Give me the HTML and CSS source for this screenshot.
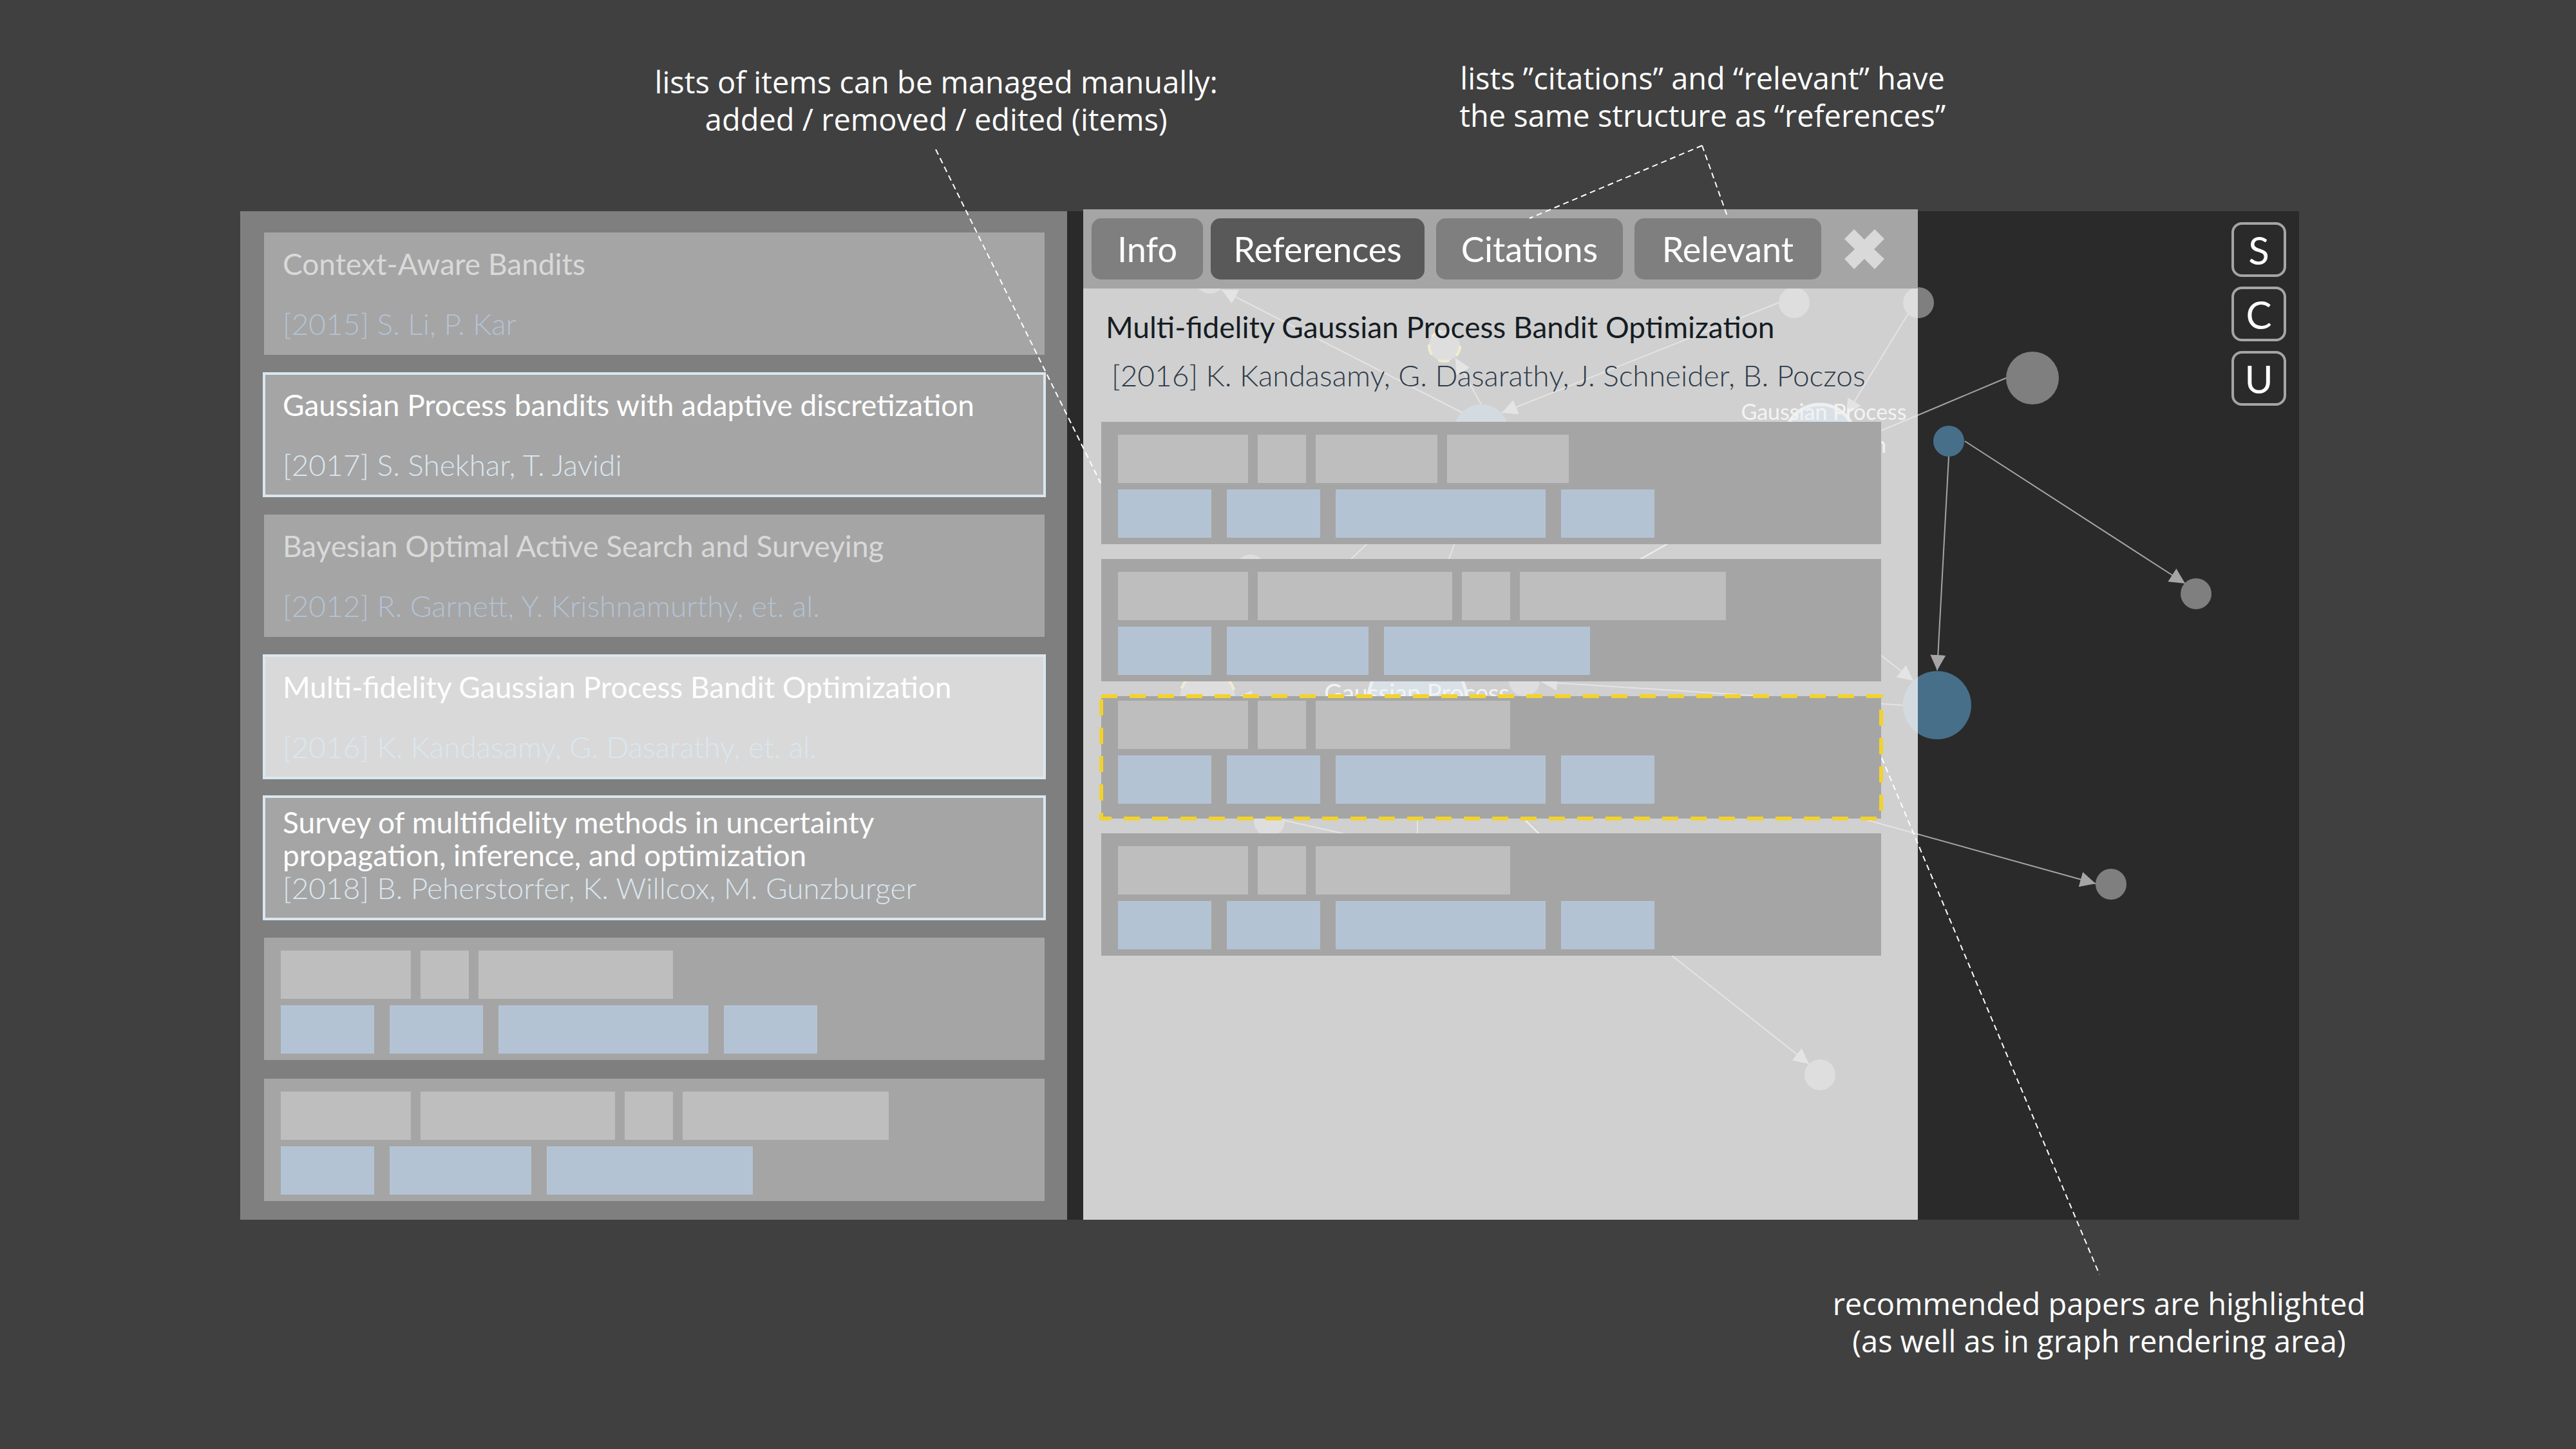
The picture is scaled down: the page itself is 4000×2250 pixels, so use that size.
FILE: index.html
```html
<!DOCTYPE html>
<html lang="en">
<head>
<meta charset="utf-8">
<meta name="viewport" content="width=device-width, initial-scale=1">
<title>Paper lists and citation graph</title>
<link rel="stylesheet" href="styles.css">
</head>
<body>
<div class="page">
  <header class="notes notes--top">
    <p class="note note--manage">lists of items can be managed manually:<br>added / removed / edited (items)</p>
    <p class="note note--lists">lists ”citations” and “relevant” have<br>the same structure as “references”</p>
  </header>

  <main class="frame">
    <div class="stage">
      <svg class="graph" viewBox="373 328 3197 1566" aria-hidden="true">
        <defs>
          <marker id="arrow" markerUnits="userSpaceOnUse" markerWidth="24" markerHeight="24" refX="24" refY="12" orient="auto">
            <path d="M0 0L24 12L0 24Z" fill="#a5a5a5"/>
          </marker>
        </defs>
        <g class="edges">
          <path d="M2271 641L1897 450"/>
          <path d="M2300 628L2260 556"/>
          <path d="M2762 470L2332 641"/>
          <path d="M2963 487L2867 644"/>
          <path d="M3115 587L2880 686"/>
          <path d="M3026 709L3008 1041"/>
          <path d="M3051 685L3393 906"/>
          <path d="M2780 907L2971 1057"/>
          <path d="M2955 1095L2394 1059"/>
          <path d="M2700 1218L3254 1372"/>
          <path d="M2122 1090L1920 1083"/>
          <path d="M2400 1329L2809 1652"/>
        </g>
        <g class="links">
          <path d="M2271 705L1960 998"/>
          <path d="M2308 714L2220 947"/>
          <path d="M2201 1170V1400"/>
          <path d="M1994 1274L2121 1302"/>
        </g>
        <g class="links links--strong">
          <path d="M2786 733L2262 1030"/>
          <path d="M2262 1167L2400 1305"/>
        </g>
        <g class="nodes">
          <circle cx="1879" cy="432" r="24"/>
          <circle cx="2786" cy="470" r="24"/>
          <circle cx="2979" cy="470" r="24"/>
          <circle cx="3156" cy="587" r="41"/>
          <circle cx="3410" cy="922" r="24"/>
          <circle cx="3278" cy="1373" r="24"/>
          <circle cx="2367" cy="1057" r="24"/>
          <circle cx="1971" cy="1275" r="24"/>
          <circle cx="1942" cy="885" r="24"/>
          <circle cx="2826" cy="1669" r="24"/>
          <circle class="recommended" cx="2243" cy="537" r="24" stroke-dasharray="17 13"/>
          <circle class="recommended" cx="1875" cy="1084" r="43" stroke-dasharray="17 13"/>
        </g>
        <g class="nodes nodes--blue">
          <circle cx="2300" cy="671" r="43"/>
          <circle cx="3026" cy="685" r="24"/>
          <circle cx="3008" cy="1095" r="53"/>
        </g>
        <g class="nodes nodes--selected">
          <circle cx="2826" cy="683" r="55"/>
          <circle cx="2201" cy="1090" r="77"/>
        </g>
        <g class="labels">
          <text class="label" x="2832" y="652">Gaussian Process</text>
          <text class="label" x="2832" y="703">Optimization</text>
          <text class="label label--large" x="2200" y="1090">Gaussian Process</text>
        </g>
      </svg>

      <section class="library" aria-label="Papers">
        <article class="card card--dim">
          <h2 class="title">Context-Aware Bandits</h2>
          <p class="authors">[2015] S. Li, P. Kar</p>
        </article>
        <article class="card card--marked">
          <h2 class="title">Gaussian Process bandits with adaptive discretization</h2>
          <p class="authors">[2017] S. Shekhar, T. Javidi</p>
        </article>
        <article class="card card--dim">
          <h2 class="title">Bayesian Optimal Active Search and Surveying</h2>
          <p class="authors">[2012] R. Garnett, Y. Krishnamurthy, et. al.</p>
        </article>
        <article class="card card--marked card--active">
          <h2 class="title">Multi-fidelity Gaussian Process Bandit Optimization</h2>
          <p class="authors">[2016] K. Kandasamy, G. Dasarathy, et. al.</p>
        </article>
        <article class="card card--marked card--tall">
          <h2 class="title">Survey of multifidelity methods in uncertainty<br>propagation, inference, and optimization</h2>
          <p class="authors">[2018] B. Peherstorfer, K. Willcox, M. Gunzburger</p>
        </article>
        <article class="card card--blank">
          <div class="bars"><i class="bar bar--m"></i><i class="bar bar--s"></i><i class="bar bar--l"></i></div>
          <div class="bars bars--blue"><i class="bar bar--a"></i><i class="bar bar--a"></i><i class="bar bar--c"></i><i class="bar bar--a"></i></div>
        </article>
        <article class="card card--blank">
          <div class="bars"><i class="bar bar--m"></i><i class="bar bar--l"></i><i class="bar bar--s"></i><i class="bar bar--xl"></i></div>
          <div class="bars bars--blue"><i class="bar bar--a"></i><i class="bar bar--b"></i><i class="bar bar--xl"></i></div>
        </article>
      </section>

      <section class="details" aria-label="Paper details">
        <div class="tabs" role="tablist">
          <div class="tab-pair">
            <button class="tab tab--info" type="button" role="tab">Info</button>
            <button class="tab tab--refs" type="button" role="tab" aria-selected="true">References</button>
          </div>
          <button class="tab" type="button" role="tab">Citations</button>
          <button class="tab" type="button" role="tab">Relevant</button>
          <button class="close" type="button" aria-label="Close">
            <svg viewBox="0 0 62 62" aria-hidden="true"><path d="M15 0L31 16L47 0L62 15L46 31L62 46L47 62L31 46L15 62L0 46L16 31L0 15Z"/></svg>
          </button>
        </div>
        <div class="paper">
          <h2 class="title paper-title">Multi-fidelity Gaussian Process Bandit Optimization</h2>
          <p class="authors paper-authors">[2016] K. Kandasamy, G. Dasarathy, J. Schneider, B. Poczos</p>
          <div class="references">
            <article class="card card--blank">
              <div class="bars"><i class="bar bar--m"></i><i class="bar bar--s"></i><i class="bar bar--t"></i><i class="bar bar--t"></i></div>
              <div class="bars bars--blue"><i class="bar bar--a"></i><i class="bar bar--a"></i><i class="bar bar--c"></i><i class="bar bar--a"></i></div>
            </article>
            <article class="card card--blank">
              <div class="bars"><i class="bar bar--m"></i><i class="bar bar--l"></i><i class="bar bar--s"></i><i class="bar bar--xl"></i></div>
              <div class="bars bars--blue"><i class="bar bar--a"></i><i class="bar bar--b"></i><i class="bar bar--xl"></i></div>
            </article>
            <article class="card card--blank card--recommended">
              <div class="bars"><i class="bar bar--m"></i><i class="bar bar--s"></i><i class="bar bar--l"></i></div>
              <div class="bars bars--blue"><i class="bar bar--a"></i><i class="bar bar--a"></i><i class="bar bar--c"></i><i class="bar bar--a"></i></div>
              <svg class="dashes" aria-hidden="true"><rect width="100%" height="100%"/></svg>
            </article>
            <article class="card card--blank">
              <div class="bars"><i class="bar bar--m"></i><i class="bar bar--s"></i><i class="bar bar--l"></i></div>
              <div class="bars bars--blue"><i class="bar bar--a"></i><i class="bar bar--a"></i><i class="bar bar--c"></i><i class="bar bar--a"></i></div>
            </article>
          </div>
        </div>
      </section>

      <nav class="keys" aria-label="Graph tools">
        <button class="key" type="button">S</button>
        <button class="key" type="button">C</button>
        <button class="key" type="button">U</button>
      </nav>
    </div>
  </main>

  <footer class="notes notes--bottom">
    <p class="note note--recommended">recommended papers are highlighted<br>(as well as in graph rendering area)</p>
  </footer>

  <svg class="pointers" viewBox="0 0 4000 2250" aria-hidden="true">
    <path d="M1453 232L1709 750"/>
    <path d="M2643 226L2375 339"/>
    <path d="M2643 226L2683 338"/>
    <path d="M2922 1177L3260 1979"/>
  </svg>
</div>
</body>
</html>
```
FILE: styles.css
```css
* {
  box-sizing: border-box;
}

body {
  margin: 0;
  background: #404040;
  color: #fff;
  font-family: Lato, "Open Sans", sans-serif;
}

h2,
p {
  margin: 0;
}

button {
  margin: 0;
  padding: 0;
  border: 0;
  background: none;
  color: inherit;
  font: inherit;
}

.page {
  position: relative;
  min-height: 100vh;
}

/* Annotations around the frame */
.notes {
  display: grid;
}

.notes--top {
  grid-template-columns: 1017fr 873fr 375fr 756fr 979fr;
  grid-template-rows: 122px;
  padding: 92px 0 114px;
}

.notes--bottom {
  grid-template-columns: 2847fr 826fr 327fr;
  padding-top: 101px;
}

.note {
  justify-self: center;
  font-family: "Open Sans", "Noto Sans", sans-serif;
  font-size: 47px;
  line-height: 58px;
  text-align: center;
  white-space: nowrap;
}

.note--manage {
  grid-column: 2;
  align-self: end;
}

.note--lists {
  grid-column: 4;
  align-self: start;
}

.note--recommended {
  grid-column: 2;
}

.pointers {
  position: absolute;
  top: 0;
  left: 0;
  width: 100%;
  fill: none;
  stroke: #fff;
  stroke-width: 2;
  stroke-dasharray: 9 6;
  pointer-events: none;
}

/* Application frame */
.frame {
  display: grid;
  grid-template-columns: 373fr 3197fr 430fr;
}

.stage {
  position: relative;
  grid-column: 2;
  display: grid;
  grid-template-columns: 1284fr 25fr 1296fr 592fr;
  background: #2a2a2a;
}

/* Graph canvas */
.graph {
  position: absolute;
  top: 0;
  left: 0;
  width: 100%;
}

.edges,
.links {
  fill: none;
  stroke: #a5a5a5;
  stroke-width: 2;
}

.edges path {
  marker-end: url(#arrow);
}

.links--strong {
  stroke: #f2f2f2;
}

.nodes {
  fill: #7f7f7f;
}

.nodes--blue {
  fill: #476f89;
}

.nodes--selected {
  fill: #6292b8;
  stroke: #dae7f0;
  stroke-width: 5;
}

.recommended {
  stroke: #f2d22e;
  stroke-width: 4;
}

.label {
  fill: #fff;
  font-size: 34px;
  text-anchor: middle;
}

.label--large {
  font-size: 38px;
}

/* Cards */
.library {
  position: relative;
  grid-column: 1;
  display: flex;
  flex-direction: column;
  gap: 29px;
  padding: 33px 35px 29px 37px;
  background: #7f7f7f;
}

.card {
  display: flex;
  flex-direction: column;
  justify-content: space-between;
  min-height: 190px;
  padding: 23px 29px;
  background: #a5a5a5;
}

.card--dim {
  color: #d9d9d9;
}

.card--marked {
  outline: 4px solid #dae7f0;
  outline-offset: -2px;
}

.card--active {
  background: #d9d9d9;
}

.card--tall {
  padding-top: 14px;
}

.title {
  font-size: 46px;
  font-weight: 400;
  line-height: 51px;
}

.authors {
  font-size: 46px;
  font-weight: 300;
  line-height: 51px;
  color: #dae7f0;
}

.card--dim .authors {
  color: #b4c3d4;
}

.card--blank {
  justify-content: flex-start;
  gap: 10px;
  padding: 20px 26px 10px;
}

.bars {
  display: flex;
  gap: 15px;
}

.bars--blue {
  gap: 24px;
}

.bar {
  width: 75px;
  height: 75px;
  background: #bebebe;
}

.bars--blue .bar {
  background: #b4c3d4;
}

.bar--m {
  width: 202px;
}

.bar--t {
  width: 189px;
}

.bar--l {
  width: 302px;
}

.bar.bar--xl {
  width: 320px;
}

.bar--a {
  width: 145px;
}

.bar--b {
  width: 220px;
}

.bar--c {
  width: 326px;
}

/* Details panel */
.details {
  position: relative;
  grid-column: 3;
  margin-top: -3px;
  background: rgba(241, 241, 241, 0.835);
}

.tabs {
  display: flex;
  align-items: center;
  gap: 18px;
  height: 123px;
  padding: 0 13px;
  background: #a5a5a5;
}

.tab-pair {
  display: flex;
  gap: 12px;
}

.tab {
  width: 290px;
  height: 95px;
  border-radius: 15px;
  background: #7f7f7f;
  font-size: 54px;
}

.tab--info {
  width: 173px;
}

.tab--refs {
  width: 332px;
  background: #595959;
}

.close {
  margin-left: 18px;
  width: 62px;
  height: 62px;
  fill: #d9d9d9;
}

.close svg {
  display: block;
}

.paper {
  padding: 34px 57px 40px 28px;
}

.paper-title {
  padding-left: 7px;
  color: #161d24;
}

.paper-authors {
  margin-top: 24px;
  padding-left: 16px;
  color: #2e3b49;
}

.references {
  display: flex;
  flex-direction: column;
  gap: 23px;
  margin-top: 47px;
}

.card--recommended {
  position: relative;
  padding-top: 7px;
}

.dashes {
  position: absolute;
  top: 0;
  left: 0;
  width: 100%;
  height: 100%;
  overflow: visible;
  fill: none;
  stroke: #f2d22e;
  stroke-width: 6;
  stroke-dasharray: 25 19;
}

/* Keyboard shortcuts */
.keys {
  position: relative;
  grid-column: 4;
  justify-self: end;
  display: flex;
  flex-direction: column;
  gap: 15px;
  padding: 17px 20px 0 0;
}

.key {
  width: 85px;
  height: 85px;
  border: 4px solid #a5a5a5;
  border-radius: 16px;
  font-size: 60px;
  line-height: 72px;
}
```
